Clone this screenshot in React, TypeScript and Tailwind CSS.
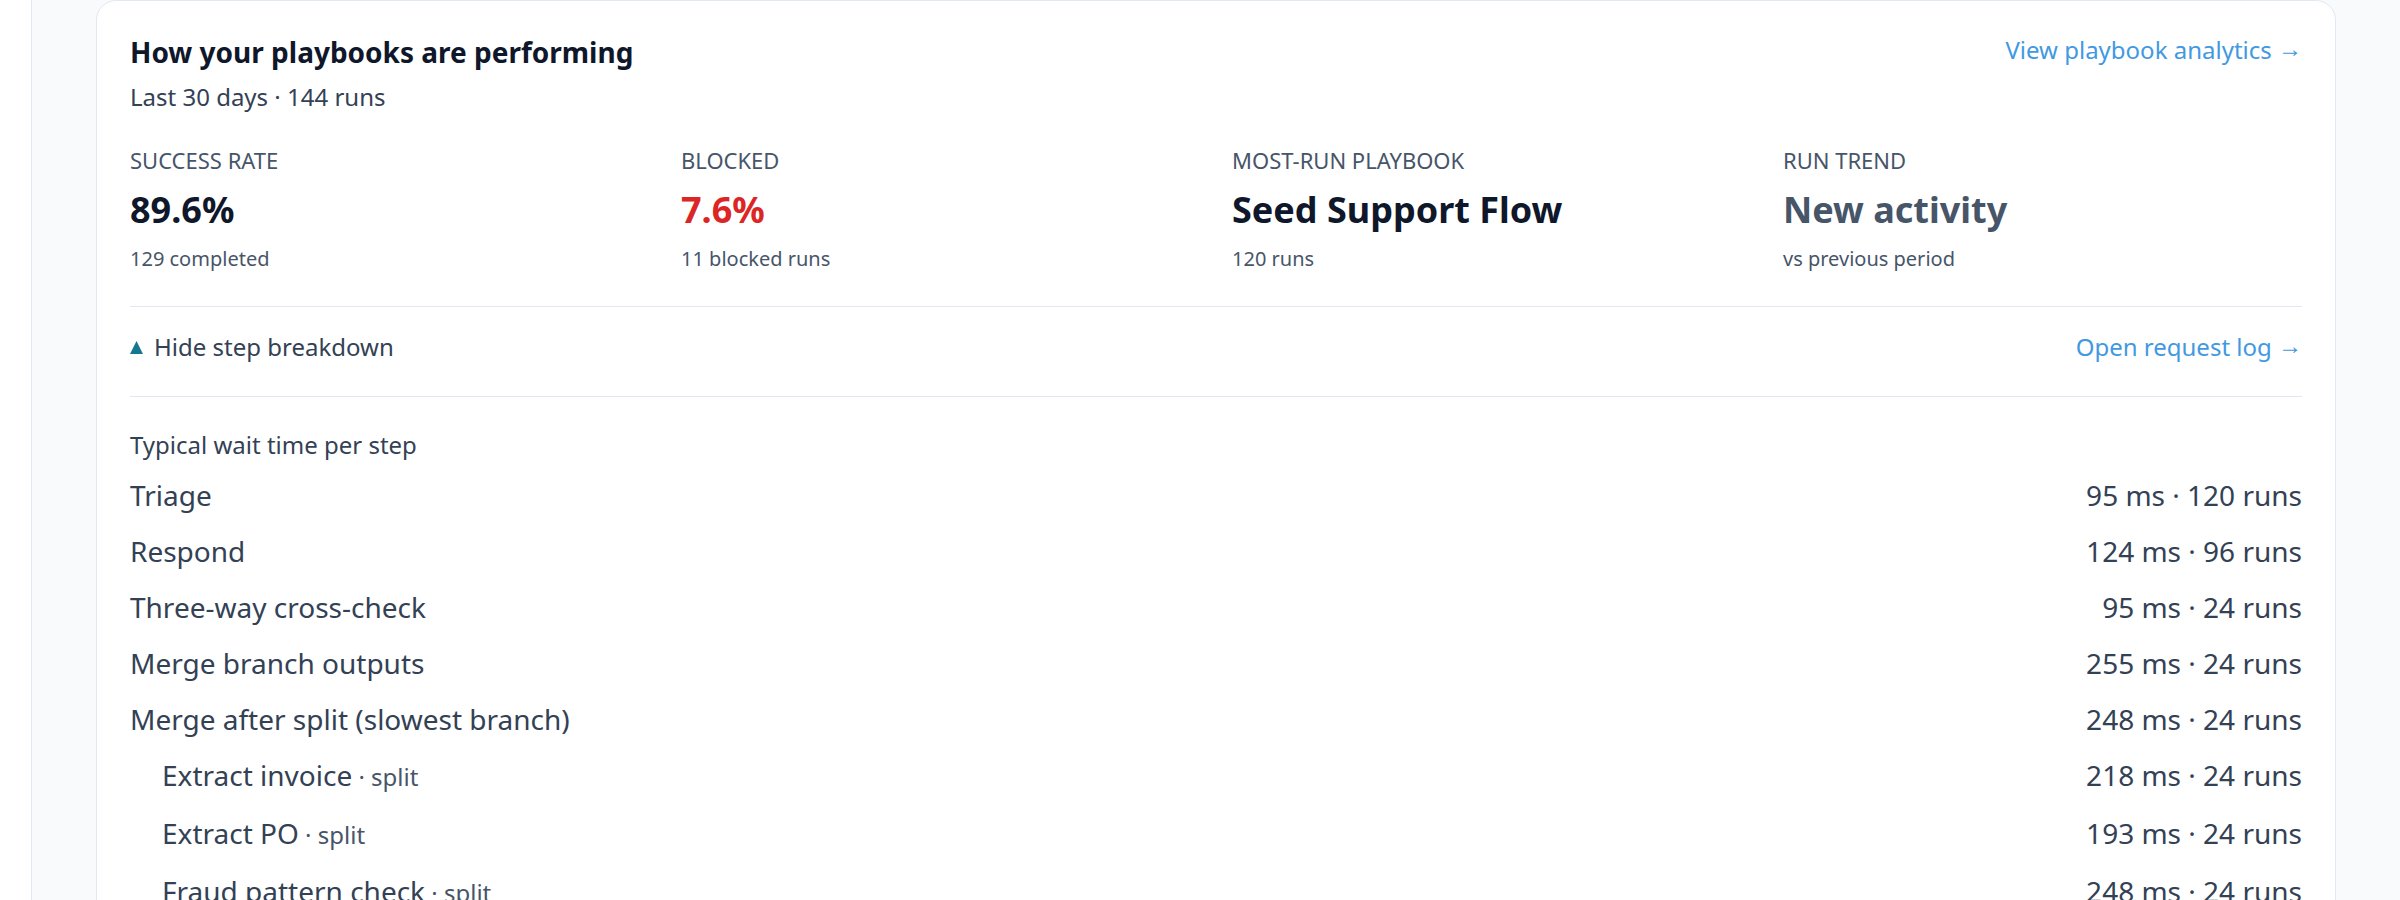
import React from "react";

type Metric = {
  label: string;
  value: string;
  note: string;
  tone: string;
};

type Step = {
  name: string;
  timing: string;
  split?: boolean;
};

const METRICS: Metric[] = [
  { label: "Success rate", value: "89.6%", note: "129 completed", tone: "text-[#0f172a]" },
  { label: "Blocked", value: "7.6%", note: "11 blocked runs", tone: "text-[#dc2626]" },
  { label: "Most-run playbook", value: "Seed Support Flow", note: "120 runs", tone: "text-[#0f172a]" },
  { label: "Run trend", value: "New activity", note: "vs previous period", tone: "text-[#475569]" },
];

const STEPS: Step[] = [
  { name: "Triage", timing: "95 ms · 120 runs" },
  { name: "Respond", timing: "124 ms · 96 runs" },
  { name: "Three-way cross-check", timing: "95 ms · 24 runs" },
  { name: "Merge branch outputs", timing: "255 ms · 24 runs" },
  { name: "Merge after split (slowest branch)", timing: "248 ms · 24 runs" },
  { name: "Extract invoice", timing: "218 ms · 24 runs", split: true },
  { name: "Extract PO", timing: "193 ms · 24 runs", split: true },
  { name: "Fraud pattern check", timing: "248 ms · 24 runs", split: true },
];

function MetricCell({ metric }: { metric: Metric }) {
  return (
    <div className="min-w-0">
      <p className="text-[22px] leading-[28px] uppercase text-[#475569]">{metric.label}</p>
      <p className={`mt-[14px] text-[36px] leading-[44px] font-bold ${metric.tone}`}>{metric.value}</p>
      <p className="mt-[13px] text-[20px] leading-[28px] text-[#475569]">{metric.note}</p>
    </div>
  );
}

function StepRow({ step }: { step: Step }) {
  return (
    <div className="flex items-baseline justify-between text-[28px] leading-[40px] text-[#334155]">
      <span className={step.split ? "pl-[32px]" : ""}>
        {step.name}
        {step.split && <span className="text-[24px] text-[#475569]"> · split</span>}
      </span>
      <span>{step.timing}</span>
    </div>
  );
}

function Arrow() {
  return <span className="relative -top-[2px]">→</span>;
}

export default function App() {
  return (
    <div className="flex min-h-screen bg-white font-['Noto_Sans',sans-serif]">
      <div className="w-[31px] shrink-0" />
      <main className="flex-1 border-l border-[#e2e8f0] bg-[#f8fafc] px-[64px]">
        <section className="rounded-[20px] border border-[#e2e8f0] bg-white px-[33px] pt-[33px] pb-[33px]">
          {/* Header */}
          <div className="flex items-start justify-between">
            <div>
              <h2 className="text-[28px] leading-[36px] font-bold text-[#0f172a]">
                How your playbooks are performing
              </h2>
              <p className="mt-[11px] text-[24px] leading-[32px] text-[#334155]">Last 30 days · 144 runs</p>
            </div>
            <a href="#" className="text-[24px] leading-[32px] text-[#4299e1]">
              View playbook analytics <Arrow />
            </a>
          </div>

          {/* Headline numbers */}
          <div className="mt-[33px] grid grid-cols-4 gap-x-[32px]">
            {METRICS.map((m) => (
              <MetricCell key={m.label} metric={m} />
            ))}
          </div>

          {/* Breakdown toggle */}
          <div className="mt-[33px] border-t border-[#e2e8f0] pt-[24px]">
            <div className="flex items-center justify-between text-[24px] leading-[32px]">
              <button className="flex items-center gap-[11px] text-[#334155]">
                <svg width="13" height="13" viewBox="0 0 12 12" className="shrink-0">
                  <polygon points="6,0 12,12 0,12" fill="#16788c" />
                </svg>
                Hide step breakdown
              </button>
              <a href="#" className="text-[#4299e1]">
                Open request log <Arrow />
              </a>
            </div>
          </div>

          {/* Step wait times */}
          <div className="mt-[33px] border-t border-[#e2e8f0] pt-[32px]">
            <p className="text-[24px] leading-[32px] text-[#334155]">Typical wait time per step</p>
            <div className="mt-[14px] flex flex-col gap-[16px]">
              {STEPS.map((s) => (
                <StepRow key={s.name} step={s} />
              ))}
            </div>
          </div>
        </section>
      </main>
    </div>
  );
}
